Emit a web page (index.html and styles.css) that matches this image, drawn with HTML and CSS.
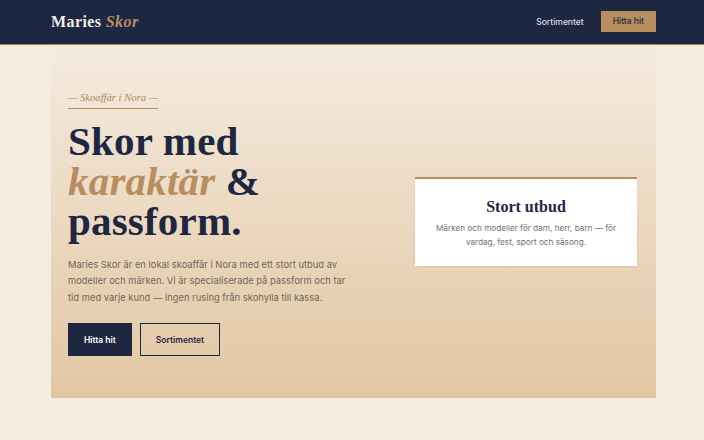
FILE: index.html
```html
<!DOCTYPE html>
<html lang="sv">
<head>
    <meta charset="UTF-8">
    <meta name="viewport" content="width=device-width, initial-scale=1.0">
    <title>Maries Skor – Skoaffär i Nora</title>
    <link rel="stylesheet" href="styles.css">
</head>
<body>
    <header class="site-header">
        <div class="container nav">
            <a href="#" class="logo">Maries <em>Skor</em></a>
            <nav class="nav-links">
                <a href="#sortiment">Sortimentet</a>
                <a href="#hitta" class="nav-cta">Hitta hit</a>
            </nav>
        </div>
    </header>

    <main>
        <section class="container hero">
            <div class="hero-text">
                <p class="eyebrow">— Skoaffär i Nora —</p>
                <h1>Skor med <em>karaktär</em> &amp; passform.</h1>
                <p class="lead">
                    Maries Skor är en lokal skoaffär i Nora med ett stort utbud av
                    modeller och märken. Vi är specialiserade på passform och tar
                    tid med varje kund — ingen rusing från skohylla till kassa.
                </p>
                <div class="hero-actions">
                    <a href="#hitta" class="btn btn-dark">Hitta hit</a>
                    <a href="#sortiment" class="btn btn-outline">Sortimentet</a>
                </div>
            </div>
            <aside class="hero-card">
                <h2>Stort utbud</h2>
                <p>Märken och modeller för dam, herr, barn — för vardag, fest, sport och säsong.</p>
            </aside>
        </section>
    </main>
</body>
</html>
```

FILE: styles.css
```css
:root {
    --navy: #1d2742;
    --tan: #b98e5e;
    --cream: #f5ece1;
    --text-muted: #6f665c;
    --serif: "Liberation Serif", "DejaVu Serif", serif;
    --sans: "Inter", "Noto Sans", sans-serif;
}

* {
    box-sizing: border-box;
}

body {
    margin: 0;
    background: var(--cream);
    font-family: var(--sans);
    color: var(--navy);
}

a {
    text-decoration: none;
    color: inherit;
}

.container {
    width: 605px;
    margin-left: 51px;
}

/* header */

.site-header {
    background: var(--navy);
    border-bottom: 1px solid #a98659;
}

.nav {
    height: 44px;
    display: flex;
    align-items: center;
    justify-content: space-between;
}

.logo {
    font-family: var(--serif);
    font-weight: 700;
    font-size: 16px;
    color: #f4ede2;
    letter-spacing: 0.4px;
}

.logo em {
    color: var(--tan);
}

.nav-links {
    display: flex;
    align-items: center;
    gap: 17px;
    font-size: 8.5px;
    font-weight: 500;
}

.nav-links a {
    color: #d9dce4;
}

.nav-links .nav-cta {
    background: var(--tan);
    color: var(--navy);
    padding: 0 12px;
    height: 21px;
    margin-top: -2px;
    display: flex;
    align-items: center;
}

/* hero */

.hero {
    height: 353px;
    padding: 0 19px 0 17px;
    display: flex;
    align-items: center;
    justify-content: space-between;
    background: linear-gradient(180deg, #f4ebdf 0%, #eddcc6 40%, #e7d1b3 70%, #e2c7a4 100%);
}

.hero-text {
    width: 290px;
    margin-top: -2px;
}

.eyebrow {
    display: inline-block;
    margin: 0 0 12px;
    padding-bottom: 5px;
    border-bottom: 1px solid var(--tan);
    font-family: var(--serif);
    font-style: italic;
    font-size: 10.6px;
    color: #b08a5e;
}

.hero h1 {
    margin: 0 0 16px;
    font-family: var(--serif);
    font-weight: 700;
    font-size: 41px;
    line-height: 40px;
    letter-spacing: 0.2px;
    color: var(--navy);
}

.hero h1 em {
    color: var(--tan);
}

.lead {
    margin: 0 0 17px;
    width: 290px;
    font-size: 9.4px;
    line-height: 16.5px;
    color: var(--text-muted);
}

.hero-actions {
    display: flex;
    gap: 8px;
}

.btn {
    height: 33px;
    display: flex;
    align-items: center;
    font-size: 8.5px;
    font-weight: 600;
}

.btn-dark {
    background: var(--navy);
    color: #fff;
    padding: 0 16px;
}

.btn-outline {
    border: 1px solid var(--navy);
    padding: 0 15px;
    color: var(--navy);
}

.hero-card {
    width: 222px;
    background: #fff;
    border-top: 2px solid var(--tan);
    padding: 19px 16px 17px;
    text-align: center;
    box-shadow: 0 1px 2px rgba(90, 60, 20, 0.12);
}

.hero-card h2 {
    margin: 0 0 5px;
    font-family: var(--serif);
    font-size: 16px;
    font-weight: 700;
    color: var(--navy);
}

.hero-card p {
    margin: 0;
    font-size: 8.2px;
    line-height: 14px;
    color: #77706a;
}
```
